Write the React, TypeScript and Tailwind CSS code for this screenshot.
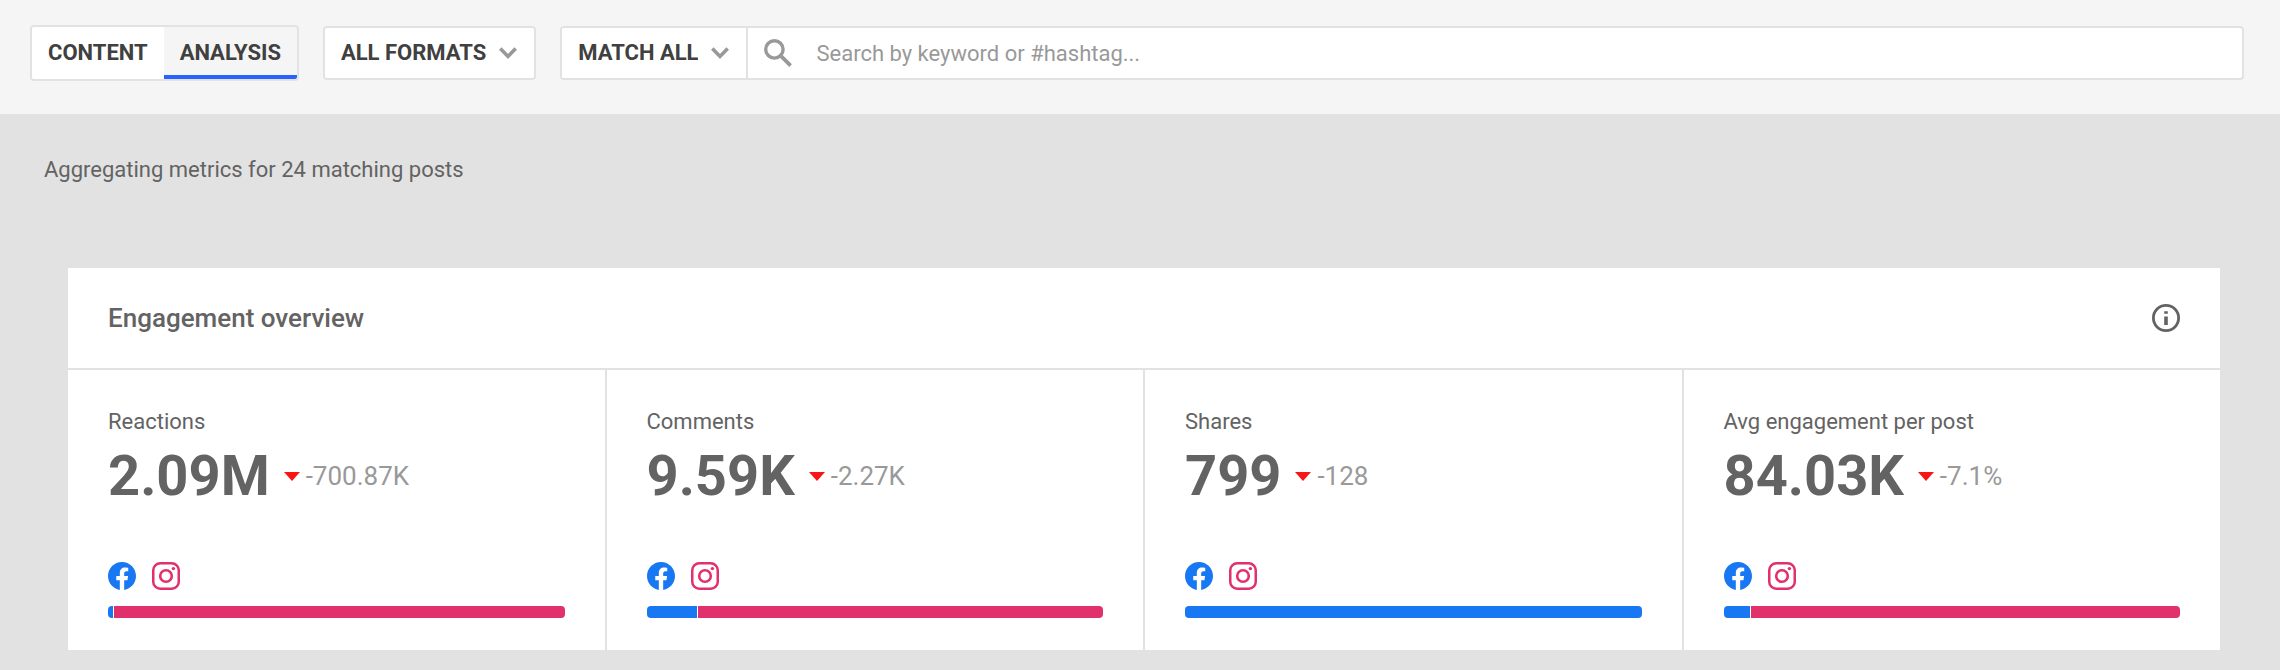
import { ReactNode, useState } from "react";

type Metric = {
  label: string;
  value: string;
  change: string;
  facebook: number;
  instagram: number;
};

const metrics: Metric[] = [
  { label: "Reactions", value: "2.09M", change: "-700.87K", facebook: 5, instagram: 450 },
  { label: "Comments", value: "9.59K", change: "-2.27K", facebook: 50, instagram: 405 },
  { label: "Shares", value: "799", change: "-128", facebook: 1, instagram: 0 },
  { label: "Avg engagement per post", value: "84.03K", change: "-7.1%", facebook: 26, instagram: 429 },
];

function FacebookIcon() {
  return (
    <svg className="size-7" viewBox="0 0 24 24" role="img" aria-label="Facebook">
      <path
        fill="#1877f2"
        d="M24 12.073c0-6.627-5.373-12-12-12s-12 5.373-12 12c0 5.99 4.388 10.954 10.125 11.854v-8.385H7.078v-3.47h3.047V9.43c0-3.007 1.792-4.669 4.533-4.669 1.312 0 2.686.235 2.686.235v2.953H15.83c-1.491 0-1.956.925-1.956 1.874v2.25h3.328l-.532 3.47h-2.796v8.385C19.612 23.027 24 18.062 24 12.073z"
      />
    </svg>
  );
}

function InstagramIcon() {
  return (
    <svg className="size-7" viewBox="0 0 28 28" fill="none" role="img" aria-label="Instagram">
      <rect x="1.25" y="1.25" width="25.5" height="25.5" rx="7" stroke="#e1306c" strokeWidth="2.5" />
      <circle cx="14" cy="14" r="5.8" stroke="#e1306c" strokeWidth="2.6" />
      <circle cx="21.4" cy="6.6" r="1.7" fill="#e1306c" />
    </svg>
  );
}

function SearchIcon() {
  return (
    <svg className="size-7 shrink-0" viewBox="0 0 28 28" fill="none" stroke="#999999" aria-hidden="true">
      <circle cx="10.4" cy="10.4" r="8.7" strokeWidth="3.4" />
      <path d="M16.6 16.6l10 10" strokeWidth="3.8" />
    </svg>
  );
}

function InfoIcon() {
  return (
    <svg className="size-7" viewBox="0 0 28 28" fill="none" aria-hidden="true">
      <circle cx="14" cy="14" r="12.6" stroke="#636363" strokeWidth="2.8" />
      <path d="M12.2 7.2h3.6v2.6h-3.6zM12.2 12.6h3.6v8.4h-3.6z" fill="#636363" />
    </svg>
  );
}

function Dropdown({ label, children }: { label: string; children: ReactNode }) {
  return (
    <div className="grid items-center">
      <select
        aria-label={label}
        className="col-start-1 row-start-1 h-[50px] appearance-none bg-white pr-12 pb-0.5 pl-4 font-bold text-[#404040] outline-none field-sizing-content"
      >
        {children}
      </select>
      <svg
        className="pointer-events-none col-start-1 row-start-1 mr-[17px] h-3 w-[18px] justify-self-end"
        viewBox="0 0 18 12"
        fill="none"
        aria-hidden="true"
      >
        <path d="M1.3 1.5L9 9.4l7.7-7.9" stroke="#999999" strokeWidth="3.6" />
      </svg>
    </div>
  );
}

function MetricCard({ metric }: { metric: Metric }) {
  return (
    <article className="bg-white px-10 pt-[38px] pb-8">
      <h3 className="leading-7">{metric.label}</h3>
      <div className="mt-2 flex items-center">
        <span className="text-[56px] leading-[64px] font-bold">{metric.value}</span>
        <svg className="ml-3.5 h-[9px] w-4" viewBox="0 0 16 9" aria-hidden="true">
          <path d="M0 0h16L8 9z" fill="#fa1414" />
        </svg>
        <span className="ml-1.5 text-[26px] leading-8 text-[#999999]">{metric.change}</span>
      </div>
      <div className="mt-[54px] flex gap-4">
        <FacebookIcon />
        <InstagramIcon />
      </div>
      <div className="mt-4 flex h-3 gap-px overflow-hidden rounded">
        <div className="bg-[#1877f2]" style={{ flexGrow: metric.facebook }} />
        {metric.instagram > 0 && (
          <div className="bg-[#e1306c]" style={{ flexGrow: metric.instagram }} />
        )}
      </div>
    </article>
  );
}

function App() {
  const [tab, setTab] = useState("analysis");

  function tabClass(name: string) {
    return tab === name
      ? "border-b-4 border-[#2962ff] bg-[#f5f5f5] pt-0.5"
      : "bg-white pb-0.5";
  }

  return (
    <div className="min-h-screen bg-[#e2e2e2] font-[Roboto,sans-serif] text-[22px] text-[#636363]">
      <header className="flex h-[114px] items-start bg-[#f5f5f5] pt-[25px] pr-9 pl-[30px]">
        <nav className="flex h-14 overflow-hidden rounded border-2 border-[#e2e2e2] font-bold text-[#404040]">
          <button
            type="button"
            className={`px-4 ${tabClass("content")}`}
            onClick={() => setTab("content")}
          >
            CONTENT
          </button>
          <button
            type="button"
            className={`px-4 ${tabClass("analysis")}`}
            onClick={() => setTab("analysis")}
          >
            ANALYSIS
          </button>
        </nav>
        <div className="mt-px ml-6 overflow-hidden rounded border-2 border-[#e2e2e2]">
          <Dropdown label="Format">
            <option>ALL FORMATS</option>
          </Dropdown>
        </div>
        <div className="mt-px ml-6 flex flex-1 overflow-hidden rounded border-2 border-[#e2e2e2] bg-white">
          <Dropdown label="Match mode">
            <option>MATCH ALL</option>
          </Dropdown>
          <label className="flex flex-1 items-center gap-6 border-l-2 border-[#e2e2e2] pl-4">
            <SearchIcon />
            <input
              type="search"
              aria-label="Search posts"
              placeholder="Search by keyword or #hashtag..."
              className="h-[50px] flex-1 outline-none placeholder:text-[#999999]"
            />
          </label>
        </div>
      </header>
      <main>
        <p className="px-11 pt-[42px] leading-7">Aggregating metrics for 24 matching posts</p>
        <section className="mt-[84px] mr-[60px] ml-[68px] bg-white">
          <div className="flex h-[102px] items-center justify-between border-b-2 border-[#e2e2e2] px-10">
            <h2 className="text-[26px] leading-8 font-medium">Engagement overview</h2>
            <button type="button" aria-label="About engagement overview">
              <InfoIcon />
            </button>
          </div>
          <div className="grid grid-cols-4 gap-0.5 bg-[#e2e2e2]">
            {metrics.map((metric) => (
              <MetricCard key={metric.label} metric={metric} />
            ))}
          </div>
        </section>
      </main>
    </div>
  );
}

export default App;
